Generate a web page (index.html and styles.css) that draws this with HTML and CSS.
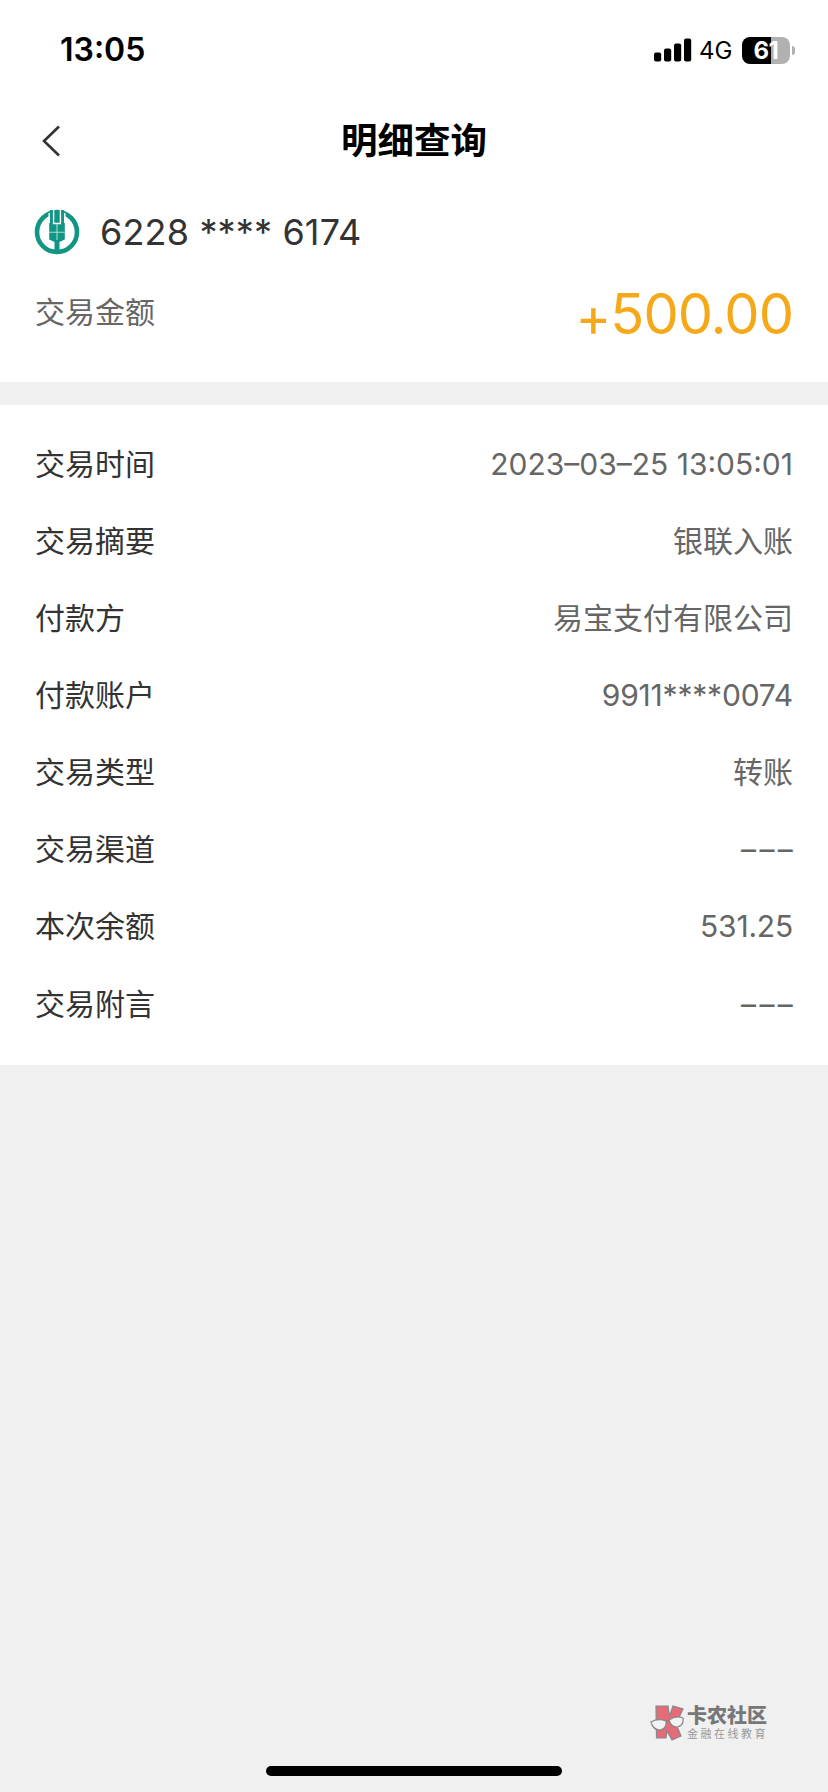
FILE: index.html
```html
<!DOCTYPE html>
<html lang="zh-CN">
<head>
<meta charset="utf-8">
<title>明细查询</title>
<link rel="stylesheet" href="styles.css">
</head>
<body>
<div class="screen">
  <header class="top">
    <div class="status">
      <span class="clock">13:05</span>
      <div class="indicators">
        <svg class="signal" width="38" height="24" viewBox="0 0 38 24">
          <rect x="0" y="14.500" width="7.200" height="9" rx="2"/>
          <rect x="10" y="10.500" width="7.200" height="13" rx="2"/>
          <rect x="20" y="5.500" width="7.200" height="18" rx="2"/>
          <rect x="30" y="0.500" width="7.200" height="23" rx="2"/>
        </svg>
        <span class="network">4G</span>
        <div class="battery"><span class="battery-body">61</span><span class="battery-cap"></span></div>
      </div>
    </div>
    <nav class="nav">
      <svg class="back" width="20" height="34" viewBox="0 0 20 34"><path d="M18 2.500 3 17l15 14.500" fill="none" stroke="#333" stroke-width="2.600"/></svg>
      <h1 class="title">明细查询</h1>
    </nav>
    <div class="card">
      <svg class="bank" width="46" height="46" viewBox="0 0 46 46">
        <circle cx="23" cy="23" r="20" fill="#fff" stroke="#109682" stroke-width="4.600"/>
        <path d="M16 1h14v13h.8v16.500L25.500 33v12h-5V33l-5.300-2.500V14h.8z" fill="#109682"/>
        <path d="M15.200 4v10M30.800 4v10M19.600 0v14.500h6.800V0" fill="none" stroke="#fff" stroke-width="1.400"/>
        <path d="M15 23.300h16M23 15v16" fill="none" stroke="#a8dbd3" stroke-width="1.100"/>
      </svg>
      <span class="card-no">6228 **** 6174</span>
    </div>
    <div class="amount-row">
      <span class="amount-label">交易金额</span>
      <span class="amount"><span class="plus">+</span>500.00</span>
    </div>
  </header>
  <main class="details">
    <div class="row"><span class="label">交易时间</span><span class="value">2023–03–25 13:05:01</span></div>
    <div class="row"><span class="label">交易摘要</span><span class="value">银联入账</span></div>
    <div class="row"><span class="label">付款方</span><span class="value">易宝支付有限公司</span></div>
    <div class="row"><span class="label">付款账户</span><span class="value tight">9911****0074</span></div>
    <div class="row"><span class="label">交易类型</span><span class="value">转账</span></div>
    <div class="row"><span class="label">交易渠道</span><span class="value dashes">–––</span></div>
    <div class="row"><span class="label">本次余额</span><span class="value tight">531.25</span></div>
    <div class="row"><span class="label">交易附言</span><span class="value dashes">–––</span></div>
  </main>
  <footer class="foot">
    <div class="brand">
      <svg width="34" height="36" viewBox="0 0 34 36">
        <path d="M6 1h12l1.500 10L23 1l10 3-7 15 5 12-9 4-5-9-1 7H6.500z" fill="#e56b78" stroke="#888" stroke-width="1.200"/>
        <path d="M1 17q7-4 15-1 1 8-6 9-7 0-9-8zM19 15q7-5 14-2 1 8-6 9-6 0-8-7z" fill="#f3f3f3" stroke="#888" stroke-width="1.200"/>
        <path d="M16 16.500q1-1.500 3.500-1" fill="none" stroke="#888" stroke-width="1.200"/>
      </svg>
      <div class="brand-text"><span class="brand-name">卡农社区</span><span class="brand-sub">金融在线教育</span></div>
    </div>
    <div class="home-bar"></div>
  </footer>
</div>
</body>
</html>
```
FILE: styles.css
```css
* { box-sizing: border-box; }
body { margin: 0; background: #f0f0f0; font-family: Inter, "Noto Sans CJK SC", sans-serif; }
.screen { width: 828px; height: 1792px; display: flex; flex-direction: column; background: #f0f0f0; }
.top { height: 382px; background: #fff; }
.status { height: 100px; display: flex; justify-content: space-between; padding: 0 33px 0 60px; align-items: center; }
.clock { font-size: 32px; font-weight: 600; line-height: 40px; }
.indicators { display: flex; align-items: center; }
.signal { fill: #000; }
.network { margin-left: 7px; width: 43px; padding-top: 1px; font-size: 24px; font-weight: 400; line-height: 30px; }
.battery { display: flex; align-items: center; gap: 2px; }
.battery-body { width: 48px; height: 27px; border-radius: 8px; background: linear-gradient(90deg, #000 61%, #b1b1b1 61%); color: #fff; font-size: 24px; font-weight: 700; line-height: 27px; text-align: center; letter-spacing: -0.500px; }
.battery-cap { width: 3px; height: 9px; border-radius: 0 4px 4px 0; background: #b1b1b1; }
.nav { height: 82px; display: grid; grid-template-columns: 100px 1fr 100px; align-items: center; }
.back { margin-left: 41px; }
.title { margin: 0; text-align: center; font-size: 36.500px; font-weight: 700; line-height: 50px; }
.card { height: 100px; display: flex; align-items: center; padding-left: 34px; gap: 20px; }
.card-no { font-size: 36px; line-height: 46px; letter-spacing: 0.150px; color: #333; }
.amount-row { height: 60px; display: flex; justify-content: space-between; align-items: center; padding: 0 35px 0 35px; }
.amount-label { margin-top: -4px; font-size: 30px; color: #666; }
.amount { margin-top: 4px; font-size: 56px; line-height: 60px; letter-spacing: -1px; color: #f5a818; }
.plus { font-size: 54px; line-height: 1; vertical-align: -2px; }
.details { margin-top: 23px; height: 660px; padding-top: 20px; background: #fff; }
.row { height: 77.150px; display: flex; justify-content: space-between; align-items: center; padding: 0 35px; font-size: 30px; line-height: 44px; }
.label { color: #333; }
.value { color: #666; }
.tight { letter-spacing: -0.200px; }
.dashes { letter-spacing: 3.300px; margin-right: -3px; }
.foot { flex: 1; display: flex; flex-direction: column; justify-content: flex-end; align-items: center; padding-bottom: 16px; }
.brand { align-self: flex-end; display: flex; align-items: center; gap: 3px; margin: 0 60px 25px 0; }
.brand-text { display: flex; flex-direction: column; }
.brand-name { font-size: 20px; font-weight: 900; line-height: 21px; color: #777; }
.brand-sub { font-size: 11px; line-height: 14px; letter-spacing: 2.500px; color: #999; }
.home-bar { width: 296px; height: 10px; border-radius: 5px; background: #000; }
```
